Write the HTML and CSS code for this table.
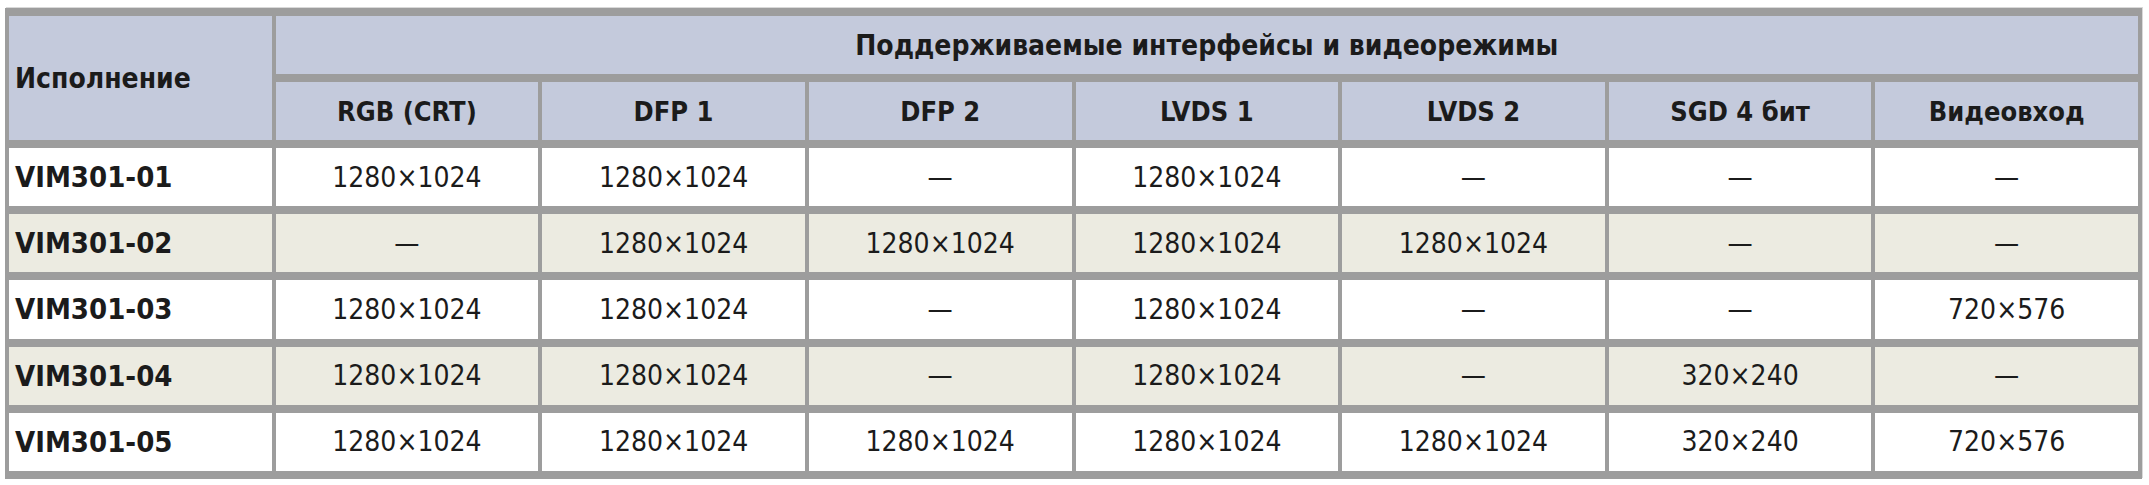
FILE: index.html
```html
<!DOCTYPE html>
<html lang="ru">
<head>
<meta charset="utf-8">
<title>VIM301</title>
<link rel="stylesheet" href="styles.css">
</head>
<body>
<div class="page">
  <div class="grid">
    <div class="cell head name">Исполнение</div>
    <div class="cell head group">Поддерживаемые интерфейсы и видеорежимы</div>
    <div class="cell head">RGB (CRT)</div>
    <div class="cell head">DFP 1</div>
    <div class="cell head">DFP 2</div>
    <div class="cell head">LVDS 1</div>
    <div class="cell head">LVDS 2</div>
    <div class="cell head">SGD 4 бит</div>
    <div class="cell head">Видеовход</div>

    <div class="cell model">VIM301-01</div>
    <div class="cell">1280×1024</div>
    <div class="cell">1280×1024</div>
    <div class="cell">—</div>
    <div class="cell">1280×1024</div>
    <div class="cell">—</div>
    <div class="cell">—</div>
    <div class="cell">—</div>

    <div class="cell model alt">VIM301-02</div>
    <div class="cell alt">—</div>
    <div class="cell alt">1280×1024</div>
    <div class="cell alt">1280×1024</div>
    <div class="cell alt">1280×1024</div>
    <div class="cell alt">1280×1024</div>
    <div class="cell alt">—</div>
    <div class="cell alt">—</div>

    <div class="cell model">VIM301-03</div>
    <div class="cell">1280×1024</div>
    <div class="cell">1280×1024</div>
    <div class="cell">—</div>
    <div class="cell">1280×1024</div>
    <div class="cell">—</div>
    <div class="cell">—</div>
    <div class="cell">720×576</div>

    <div class="cell model alt">VIM301-04</div>
    <div class="cell alt">1280×1024</div>
    <div class="cell alt">1280×1024</div>
    <div class="cell alt">—</div>
    <div class="cell alt">1280×1024</div>
    <div class="cell alt">—</div>
    <div class="cell alt">320×240</div>
    <div class="cell alt">—</div>

    <div class="cell model">VIM301-05</div>
    <div class="cell">1280×1024</div>
    <div class="cell">1280×1024</div>
    <div class="cell">1280×1024</div>
    <div class="cell">1280×1024</div>
    <div class="cell">1280×1024</div>
    <div class="cell">320×240</div>
    <div class="cell">720×576</div>
  </div>
</div>
</body>
</html>
```

FILE: styles.css
```css
html, body {
  margin: 0;
  padding: 0;
  background: #ffffff;
}

.page {
  padding: 8px 0 0 5px;
}

.grid {
  width: 2137px;
  box-sizing: border-box;
  display: grid;
  grid-template-columns: repeat(8, 1fr);
  grid-template-rows: 58px 58px repeat(5, 58.2px);
  column-gap: 4px;
  row-gap: 8px;
  padding: 8px 4px;
  background: #9d9d9d;
  box-shadow: 1px -1px 0 #d9d9d9;
  font-family: "DejaVu Sans Condensed", "DejaVu Sans", sans-serif;
  font-stretch: condensed;
  color: #1b1b1b;
}

.cell {
  display: flex;
  align-items: center;
  justify-content: center;
  background: #ffffff;
  font-size: 28px;
  white-space: nowrap;
}

.cell.alt {
  background: #ecebe1;
}

.head {
  background: #c4cadc;
  font-weight: bold;
  font-size: 27px;
}

.name {
  grid-row: 1 / span 2;
  justify-content: flex-start;
  padding-left: 6px;
  font-size: 28px;
}

.group {
  grid-column: 2 / span 7;
  font-size: 28px;
}

.model {
  justify-content: flex-start;
  padding-left: 6px;
  font-weight: bold;
  font-size: 29px;
}
```
